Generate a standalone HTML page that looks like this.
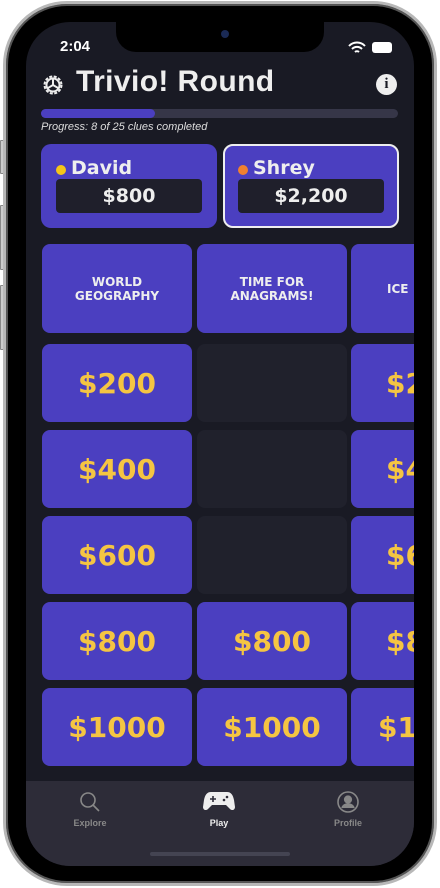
<!DOCTYPE html>
<html><head><meta charset="utf-8"><style>
*{margin:0;padding:0;box-sizing:border-box}
body{width:440px;height:888px;background:#fff;position:relative;overflow:hidden;font-family:"Liberation Sans",sans-serif}
.btn{position:absolute;left:0;width:4px;background:#ccc;border:1px solid #888;border-radius:1px}
.frame{position:absolute;left:3px;top:1px;width:434px;height:885px;border-radius:64px;background:#000;border:3px solid #b8b8b8;box-shadow:inset 0 0 0 2px #555}
.screen{position:absolute;left:26px;top:22px;width:388px;height:844px;border-radius:44px;background:#191a24;overflow:hidden}
.notch{position:absolute;left:90px;top:0;width:208px;height:30px;background:#000;border-radius:0 0 20px 20px}
.time{position:absolute;left:34px;top:16px;color:#fff;font-size:15px;font-weight:bold}
.title{position:absolute;left:50px;top:43px;color:#eee;font-size:30px;font-weight:bold;letter-spacing:0.4px}
.info{position:absolute;left:350px;top:52px;width:21px;height:21px;border-radius:50%;background:#eee;color:#191a24;font:bold 15px "Liberation Serif",serif;text-align:center;line-height:21px}
.bar{position:absolute;left:15px;top:87px;width:357px;height:9px;border-radius:5px;background:#363648}
.fill{width:114px;height:9px;border-radius:5px;background:#4b3fc0}
.prog{position:absolute;left:15px;top:99px;color:#ddd;font-size:11px;font-style:italic}
.card{position:absolute;top:122px;width:176px;height:84px;border-radius:10px;background:#4b3fc0}
.card .nm{position:absolute;left:30px;top:13px;color:#eee;font-size:19px;font-weight:bold;font-family:"DejaVu Sans",sans-serif}
.card .dot{position:absolute;left:15px;top:21px;width:10px;height:10px;border-radius:50%}
.card .sc{position:absolute;left:15px;top:35px;width:146px;height:34px;border-radius:4px;background:#1f1f2b;color:#eee;font:bold 19px "DejaVu Sans",sans-serif;text-align:center;line-height:34px}
.cell{position:absolute;width:150px;border-radius:8px;background:#4b3fc0;color:#f5c542;font:bold 28px "DejaVu Sans",sans-serif;display:flex;align-items:center;justify-content:center;text-align:center}
.cell.e{background:#20212c}
.cell.h{color:#eee;font-size:12px;line-height:14px}
.tab{position:absolute;left:0;top:759px;width:388px;height:85px;background:#2d2c38}
.tl{position:absolute;top:796px;font-size:9px;font-weight:bold;color:#888;text-align:center;width:80px}
.home{position:absolute;left:124px;top:830px;width:140px;height:4px;border-radius:2px;background:#444452}
</style></head><body>
<div class="btn" style="top:140px;height:34px"></div>
<div class="btn" style="top:205px;height:65px"></div>
<div class="btn" style="top:285px;height:65px"></div>
<div class="frame"></div>
<div class="screen">
<div class="notch"><div style="position:absolute;left:105px;top:8px;width:8px;height:8px;border-radius:50%;background:#1a2a55"></div></div>
<div class="time">2:04</div>
<svg style="position:absolute;left:322px;top:19px" width="18" height="13" viewBox="0 0 18 13"><path d="M1 5a11 11 0 0 1 16 0M4 8a7 7 0 0 1 10 0M7 11a3 3 0 0 1 4 0" stroke="#fff" stroke-width="2" fill="none"/></svg>
<div style="position:absolute;left:346px;top:20px;width:20px;height:11px;border-radius:3px;background:#fff"></div>
<svg style="position:absolute;left:15px;top:51px" width="24" height="24" viewBox="0 0 24 24" fill="none" stroke="#eee" stroke-width="2"><circle cx="12" cy="12" r="8.5" stroke-dasharray="3 1.5"/><circle cx="12" cy="12" r="6.5"/><path d="M12 12V5.5M12 12l5.6 3.3M12 12l-5.6 3.3"/></svg>
<div class="title">Trivio! Round</div>
<div class="info">i</div>
<div class="bar"><div class="fill"></div></div>
<div class="prog">Progress: 8 of 25 clues completed</div>
<div class="card" style="left:15px"><div class="dot" style="background:#f5c518"></div><div class="nm">David</div><div class="sc">$800</div></div>
<div class="card" style="left:197px;border:2px solid #eee"><div class="dot" style="background:#f08030;left:13px;top:19px"></div><div class="nm" style="left:28px;top:11px">Shrey</div><div class="sc" style="left:13px;top:33px">$2,200</div></div>

<div class="cell h" style="left:16px;top:222px;height:89px">WORLD<br>GEOGRAPHY</div>
<div class="cell h" style="left:171px;top:222px;height:89px">TIME FOR<br>ANAGRAMS!</div>
<div class="cell h" style="left:325px;top:222px;height:89px;justify-content:flex-start;padding-left:36px">ICE</div>

<div class="cell" style="left:16px;top:322px;height:78px">$200</div>
<div class="cell e" style="left:171px;top:322px;height:78px"></div>
<div class="cell" style="left:325px;top:322px;height:78px;justify-content:flex-start;padding-left:35px">$200</div>
<div class="cell" style="left:16px;top:408px;height:78px">$400</div>
<div class="cell e" style="left:171px;top:408px;height:78px"></div>
<div class="cell" style="left:325px;top:408px;height:78px;justify-content:flex-start;padding-left:35px">$400</div>
<div class="cell" style="left:16px;top:494px;height:78px">$600</div>
<div class="cell e" style="left:171px;top:494px;height:78px"></div>
<div class="cell" style="left:325px;top:494px;height:78px;justify-content:flex-start;padding-left:35px">$600</div>
<div class="cell" style="left:16px;top:580px;height:78px">$800</div>
<div class="cell" style="left:171px;top:580px;height:78px">$800</div>
<div class="cell" style="left:325px;top:580px;height:78px;justify-content:flex-start;padding-left:35px">$800</div>
<div class="cell" style="left:16px;top:666px;height:78px">$1000</div>
<div class="cell" style="left:171px;top:666px;height:78px">$1000</div>
<div class="cell" style="left:325px;top:666px;height:78px;justify-content:flex-start;padding-left:27px">$1000</div>

<div class="tab"></div>
<svg style="position:absolute;left:53px;top:769px" width="22" height="22" viewBox="0 0 22 22" fill="none" stroke="#888" stroke-width="1.6"><circle cx="9" cy="9" r="7"/><path d="M14 14l6 6"/></svg>
<div class="tl" style="left:24px">Explore</div>
<svg style="position:absolute;left:177px;top:769px" width="32" height="20" viewBox="0 0 32 20"><path d="M8 1h16c4 0 6 3 7 8l1 7c0 3-3 4-5 2l-4-4H9l-4 4c-2 2-5 1-5-2l1-7C2 4 4 1 8 1z" fill="#eee"/><path d="M7 8h6M10 5v6" stroke="#2d2c38" stroke-width="1.6"/><circle cx="21" cy="9" r="1.3" fill="#2d2c38"/><circle cx="24" cy="6" r="1.3" fill="#2d2c38"/></svg>
<div class="tl" style="left:153px;color:#eee">Play</div>
<svg style="position:absolute;left:311px;top:769px" width="22" height="22" viewBox="0 0 22 22" fill="none" stroke="#888" stroke-width="1.6"><circle cx="11" cy="11" r="10"/><circle cx="11" cy="8.5" r="3.3" fill="#888"/><path d="M5 17c1-3 3.5-4 6-4s5 1 6 4" fill="#888"/></svg>
<div class="tl" style="left:282px">Profile</div>
<div class="home"></div>
</div>
</body></html>
